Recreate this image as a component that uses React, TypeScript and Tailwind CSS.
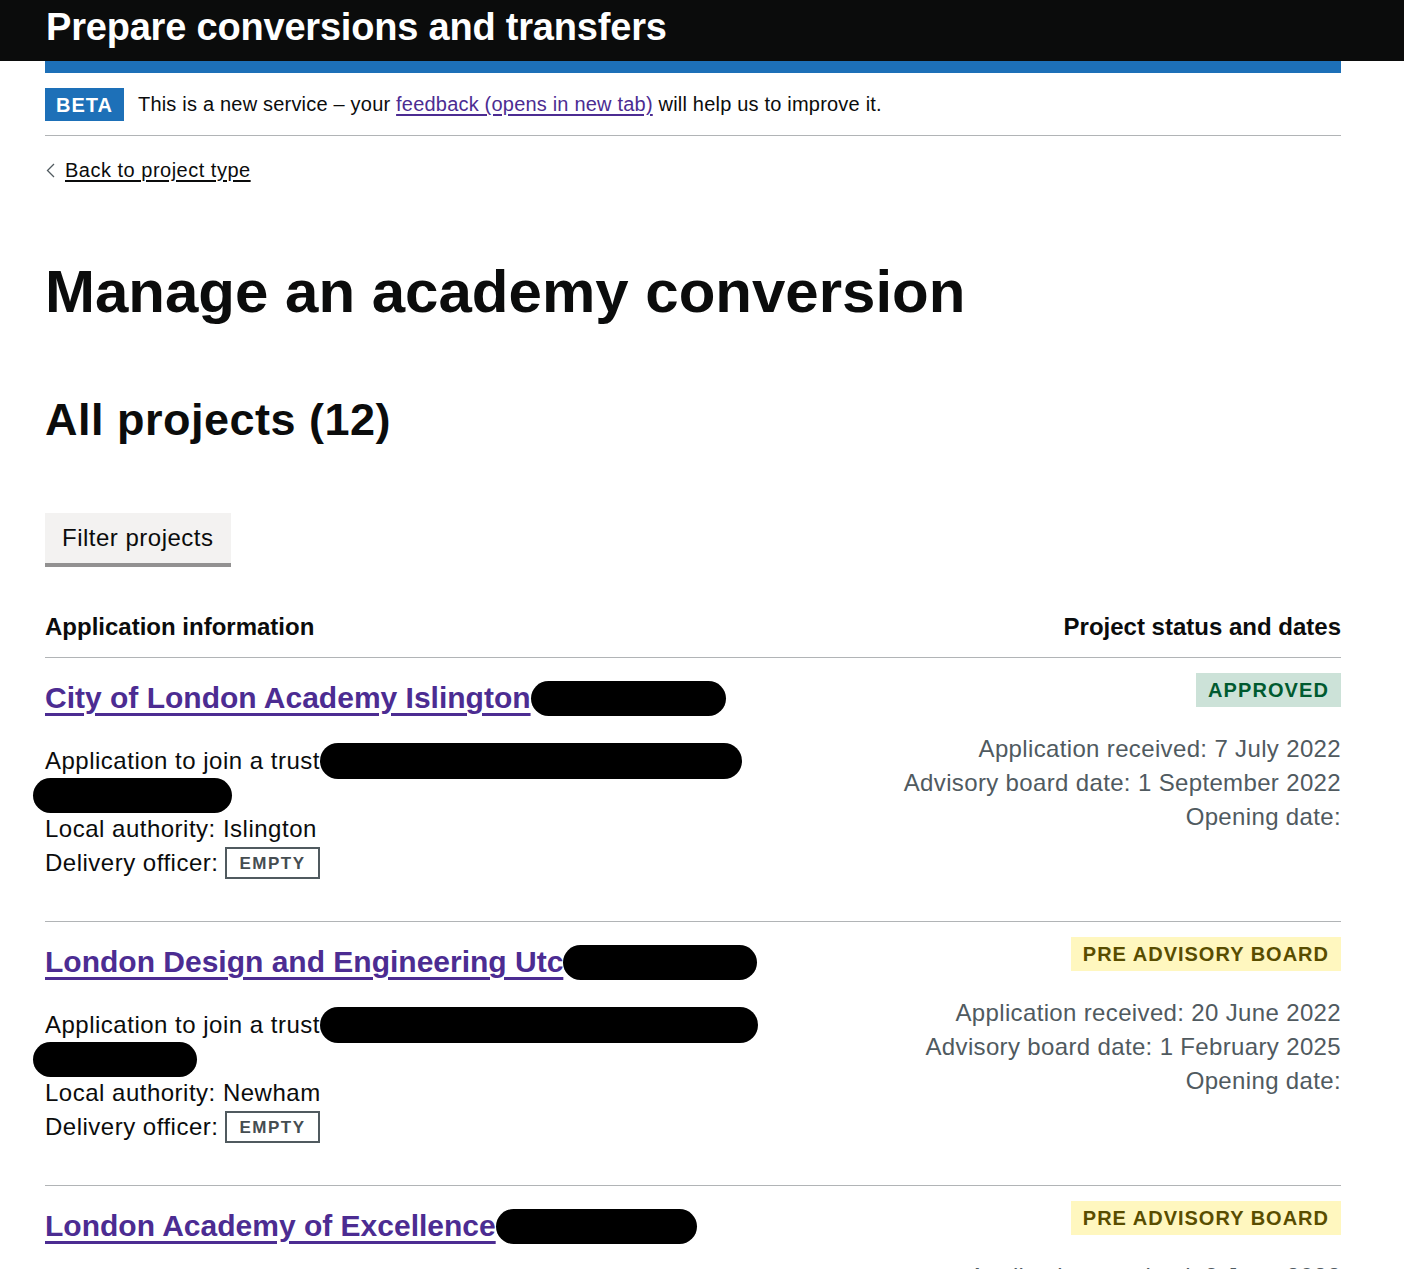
const font = "font-['Liberation_Sans',Arial,sans-serif]";

type Project = {
    name: string;
    namePill: number;
    trustPill: number;
    trustPill2: number;
    authority: string;
    status: "approved" | "pre";
    received: string;
    board: string;
};

const projects: Project[] = [
    {
        name: "City of London Academy Islington",
        namePill: 195,
        trustPill: 422,
        trustPill2: 199,
        authority: "Islington",
        status: "approved",
        received: "7 July 2022",
        board: "1 September 2022",
    },
    {
        name: "London Design and Engineering Utc",
        namePill: 194,
        trustPill: 438,
        trustPill2: 164,
        authority: "Newham",
        status: "pre",
        received: "20 June 2022",
        board: "1 February 2025",
    },
    {
        name: "London Academy of Excellence",
        namePill: 201,
        trustPill: 410,
        trustPill2: 180,
        authority: "Newham",
        status: "pre",
        received: "9 June 2022",
        board: "1 February 2025",
    },
];

function StatusTag({ status }: { status: Project["status"] }) {
    if (status === "approved") {
        return (
            <span className="inline-flex items-center h-[34px] px-[12px] bg-[#cce2d8] text-[#005a30] text-[20px] font-bold tracking-[1.1px] leading-none">
                APPROVED
            </span>
        );
    }
    return (
        <span className="inline-flex items-center h-[34px] px-[12px] bg-[#fff7bf] text-[#594d00] text-[20px] font-bold tracking-[1px] leading-none">
            PRE ADVISORY BOARD
        </span>
    );
}

function ProjectRow({ p }: { p: Project }) {
    return (
        <div className="flex justify-between border-b border-[#b1b4b6] pb-[41px]">
            {/* ---- left: application info ---- */}
            <div className="pt-[22px] text-[24px] leading-[34px] tracking-[0.5px] text-[#0b0c0c]">
                <div className="flex items-center h-[36px]">
                    <a href="#" className="text-[30px] leading-[36px] font-bold text-[#4c2c92] underline decoration-[3px] underline-offset-[5px] tracking-normal">
                        {p.name}
                    </a>
                    <span className="inline-block h-[35px] rounded-full bg-black" style={{ width: p.namePill }} />
                </div>
                <div className="mt-[28px] flex items-center h-[34px]">
                    <span>Application to join a trust</span>
                    <span className="inline-block h-[36px] rounded-full bg-black" style={{ width: p.trustPill }} />
                </div>
                <div className="h-[34px] flex items-center -ml-[12px]">
                    <span className="inline-block h-[35px] rounded-full bg-black" style={{ width: p.trustPill2 }} />
                </div>
                <div>Local authority: {p.authority}</div>
                <div className="flex items-center">
                    <span>Delivery officer:</span>
                    <span className="ml-[7px] inline-flex items-center h-[32px] px-[12px] border-2 border-[#505a5f] text-[#454d51] text-[17px] font-bold tracking-[1.5px] leading-none">
                        EMPTY
                    </span>
                </div>
            </div>

            {/* ---- right: status and dates ---- */}
            <div className="pt-[15px] flex flex-col items-end text-[24px] leading-[34px] tracking-[0.35px] text-[#505a5f]">
                <StatusTag status={p.status} />
                <div className="mt-[25px] text-right">
                    <div>Application received: {p.received}</div>
                    <div>Advisory board date: {p.board}</div>
                    <div>Opening date:</div>
                </div>
            </div>
        </div>
    );
}

export default function App() {
    return (
        <div className={`${font} h-[1269px] overflow-hidden bg-white text-[#0b0c0c]`}>
            {/* ---- Header ---- */}
            <header className="bg-[#0b0c0c] h-[61px]">
                <div className="ml-[46px] pt-[5px] text-[38px] leading-[44px] font-bold text-white tracking-[-0.2px]">
                    Prepare conversions and transfers
                </div>
            </header>

            <div className="ml-[45px] w-[1296px]">
                <div className="h-[12px] bg-[#1d70b8]" />

                {/* ---- Phase banner ---- */}
                <div className="flex items-center pt-[15px] pb-[14px] border-b border-[#b1b4b6]">
                    <span className="inline-flex items-center h-[33px] px-[11px] bg-[#1d70b8] text-white text-[20px] font-bold tracking-[1px] leading-none">
                        BETA
                    </span>
                    <span className="ml-[14px] text-[20px] leading-[25px] tracking-[0.2px]">
                        This is a new service – your{" "}
                        <a href="#" className="text-[#4c2c92] underline underline-offset-[3px]">
                            feedback (opens in new tab)
                        </a>{" "}
                        will help us to improve it.
                    </span>
                </div>

                {/* ---- Back link ---- */}
                <a href="#" className="mt-[22px] flex items-center text-[20px] leading-[25px] tracking-[0.5px] text-[#0b0c0c]">
                    <svg width="9" height="15" viewBox="0 0 9 15" className="ml-[1px] mr-[10px]">
                        <path d="M8 1 L1.5 7.5 L8 14" fill="none" stroke="#505a5f" strokeWidth="1.3" />
                    </svg>
                    <span className="underline underline-offset-[3px]">Back to project type</span>
                </a>

                <h1 className="mt-[77px] text-[60px] leading-[64px] font-bold tracking-normal">
                    Manage an academy conversion
                </h1>

                <h2 className="mt-[71px] text-[45px] leading-[50px] font-bold tracking-[0.5px]">All projects (12)</h2>

                <button className="mt-[68px] h-[50px] px-[17px] bg-[#f3f2f1] shadow-[0_4px_0_#929191] text-[24px] tracking-[0.5px] text-[#0b0c0c] leading-none">
                    Filter projects
                </button>

                {/* ---- Table ---- */}
                <div className="mt-[49px] flex justify-between pb-[15px] border-b border-[#b1b4b6] text-[24px] leading-[30px] font-bold">
                    <span>Application information</span>
                    <span>Project status and dates</span>
                </div>

                {projects.map((p) => (
                    <ProjectRow key={p.name} p={p} />
                ))}
            </div>
        </div>
    );
}
